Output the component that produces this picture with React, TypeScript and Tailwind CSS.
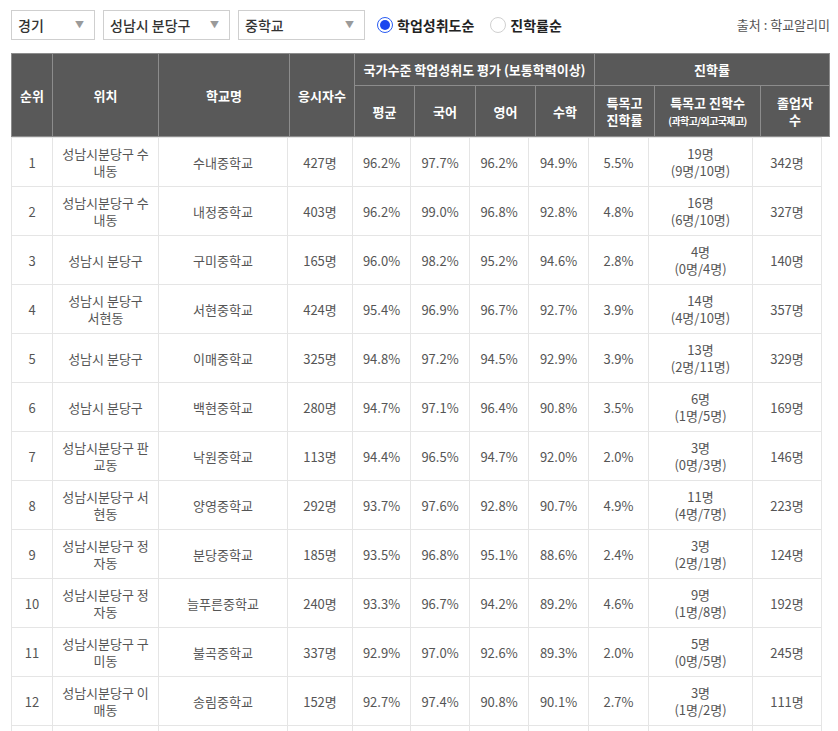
import React from "react";

type Row = {
  rank: number;
  loc: string[];
  name: string;
  takers: string;
  avg: string;
  kor: string;
  eng: string;
  math: string;
  rate: string;
  count: string;
  detail: string;
  grads: string;
};

const rows: Row[] = [
  { rank: 1, loc: ["성남시분당구 수", "내동"], name: "수내중학교", takers: "427명", avg: "96.2%", kor: "97.7%", eng: "96.2%", math: "94.9%", rate: "5.5%", count: "19명", detail: "(9명/10명)", grads: "342명" },
  { rank: 2, loc: ["성남시분당구 수", "내동"], name: "내정중학교", takers: "403명", avg: "96.2%", kor: "99.0%", eng: "96.8%", math: "92.8%", rate: "4.8%", count: "16명", detail: "(6명/10명)", grads: "327명" },
  { rank: 3, loc: ["성남시 분당구"], name: "구미중학교", takers: "165명", avg: "96.0%", kor: "98.2%", eng: "95.2%", math: "94.6%", rate: "2.8%", count: "4명", detail: "(0명/4명)", grads: "140명" },
  { rank: 4, loc: ["성남시 분당구", "서현동"], name: "서현중학교", takers: "424명", avg: "95.4%", kor: "96.9%", eng: "96.7%", math: "92.7%", rate: "3.9%", count: "14명", detail: "(4명/10명)", grads: "357명" },
  { rank: 5, loc: ["성남시 분당구"], name: "이매중학교", takers: "325명", avg: "94.8%", kor: "97.2%", eng: "94.5%", math: "92.9%", rate: "3.9%", count: "13명", detail: "(2명/11명)", grads: "329명" },
  { rank: 6, loc: ["성남시 분당구"], name: "백현중학교", takers: "280명", avg: "94.7%", kor: "97.1%", eng: "96.4%", math: "90.8%", rate: "3.5%", count: "6명", detail: "(1명/5명)", grads: "169명" },
  { rank: 7, loc: ["성남시분당구 판", "교동"], name: "낙원중학교", takers: "113명", avg: "94.4%", kor: "96.5%", eng: "94.7%", math: "92.0%", rate: "2.0%", count: "3명", detail: "(0명/3명)", grads: "146명" },
  { rank: 8, loc: ["성남시분당구 서", "현동"], name: "양영중학교", takers: "292명", avg: "93.7%", kor: "97.6%", eng: "92.8%", math: "90.7%", rate: "4.9%", count: "11명", detail: "(4명/7명)", grads: "223명" },
  { rank: 9, loc: ["성남시분당구 정", "자동"], name: "분당중학교", takers: "185명", avg: "93.5%", kor: "96.8%", eng: "95.1%", math: "88.6%", rate: "2.4%", count: "3명", detail: "(2명/1명)", grads: "124명" },
  { rank: 10, loc: ["성남시분당구 정", "자동"], name: "늘푸른중학교", takers: "240명", avg: "93.3%", kor: "96.7%", eng: "94.2%", math: "89.2%", rate: "4.6%", count: "9명", detail: "(1명/8명)", grads: "192명" },
  { rank: 11, loc: ["성남시분당구 구", "미동"], name: "불곡중학교", takers: "337명", avg: "92.9%", kor: "97.0%", eng: "92.6%", math: "89.3%", rate: "2.0%", count: "5명", detail: "(0명/5명)", grads: "245명" },
  { rank: 12, loc: ["성남시분당구 이", "매동"], name: "송림중학교", takers: "152명", avg: "92.7%", kor: "97.4%", eng: "90.8%", math: "90.1%", rate: "2.7%", count: "3명", detail: "(1명/2명)", grads: "111명" },
  { rank: 13, loc: ["성남시분당구 야", "탑동"], name: "매송중학교", takers: "318명", avg: "92.5%", kor: "96.2%", eng: "93.1%", math: "88.4%", rate: "2.2%", count: "6명", detail: "(1명/5명)", grads: "270명" },
];

const headWidths = [41, 106, 131, 65, 60, 61, 60, 59, 60, 106, 69];
const bodyWidths = [41, 106, 129, 65, 58, 59, 59, 60, 60, 104, 69];

function FakeSelect({ label, width }: { label: string; width: string }) {
  return (
    <div
      className={`${width} h-[30px] flex items-center justify-between border border-[#cfcfcf] bg-white pl-[6px] pr-[10px]`}
    >
      <span className="text-[14px] font-medium text-[#333]">{label}</span>
      <span className="text-[9px] text-[#9a9a9a]">▼</span>
    </div>
  );
}

function Radio({ checked, label }: { checked: boolean; label: string }) {
  return (
    <label className="flex items-center gap-[4px]">
      {checked ? (
        <span className="w-[16px] h-[16px] rounded-full border-[1.5px] border-[#2a5cf3] bg-white flex items-center justify-center">
          <span className="w-[10px] h-[10px] rounded-full bg-[#1a46ef]" />
        </span>
      ) : (
        <span className="w-[16px] h-[16px] rounded-full border border-[#d0d0d0] bg-white" />
      )}
      <span className="text-[14px] font-semibold text-[#222]">{label}</span>
    </label>
  );
}

const th = "border border-[#8c8c8c] text-white font-bold text-[13px] leading-[17px] text-center align-middle";
const td = "border border-[#e5e5e5] text-[#555] text-[13px] leading-[17px] text-center align-middle px-1";

export default function App() {
  return (
    <div
      className="w-[838px] bg-white pl-[11px] pt-[10px]"
      style={{ fontFamily: '"Noto Sans CJK KR", "Noto Sans", sans-serif' }}
    >
      <div className="flex items-center w-[819px] h-[30px]">
        <div className="flex gap-[8px]">
          <FakeSelect label="경기" width="w-[84px]" />
          <FakeSelect label="성남시 분당구" width="w-[127px]" />
          <FakeSelect label="중학교" width="w-[127px]" />
        </div>
        <div className="flex items-center gap-[16px] ml-[12px]">
          <Radio checked label="학업성취도순" />
          <Radio checked={false} label="진학률순" />
        </div>
        <span className="ml-auto text-[13px] text-[#555]">출처 : 학교알리미</span>
      </div>

      <table className="mt-[13px] w-[819px] table-fixed border-collapse bg-[#595959]">
        <colgroup>
          {headWidths.map((w, i) => (
            <col key={i} style={{ width: w }} />
          ))}
        </colgroup>
        <thead>
          <tr className="h-[32px]">
            <th rowSpan={2} className={th}>순위</th>
            <th rowSpan={2} className={th}>위치</th>
            <th rowSpan={2} className={th}>학교명</th>
            <th rowSpan={2} className={th}>응시자수</th>
            <th colSpan={4} className={th}>국가수준 학업성취도 평가 (보통학력이상)</th>
            <th colSpan={3} className={th}>진학률</th>
          </tr>
          <tr className="h-[51px]">
            <th className={th}>평균</th>
            <th className={th}>국어</th>
            <th className={th}>영어</th>
            <th className={th}>수학</th>
            <th className={th}>특목고<br />진학률</th>
            <th className={th}>
              특목고 진학수
              <br />
              <span className="text-[10px] tracking-[-0.6px]">(과학고/외고국제고)</span>
            </th>
            <th className={th}>졸업자<br />수</th>
          </tr>
        </thead>
      </table>

      <table className="w-[811px] table-fixed border-collapse">
        <colgroup>
          {bodyWidths.map((w, i) => (
            <col key={i} style={{ width: w }} />
          ))}
        </colgroup>
        <tbody>
          {rows.map((r) => (
            <tr key={r.rank} className="h-[49px]">
              <td className={td}>{r.rank}</td>
              <td className={td}>
                {r.loc.map((l, i) => (
                  <div key={i}>{l}</div>
                ))}
              </td>
              <td className={td}>{r.name}</td>
              <td className={td}>{r.takers}</td>
              <td className={td}>{r.avg}</td>
              <td className={td}>{r.kor}</td>
              <td className={td}>{r.eng}</td>
              <td className={td}>{r.math}</td>
              <td className={td}>{r.rate}</td>
              <td className={td}>
                <div>{r.count}</div>
                <div>{r.detail}</div>
              </td>
              <td className={td}>{r.grads}</td>
            </tr>
          ))}
        </tbody>
      </table>
    </div>
  );
}
